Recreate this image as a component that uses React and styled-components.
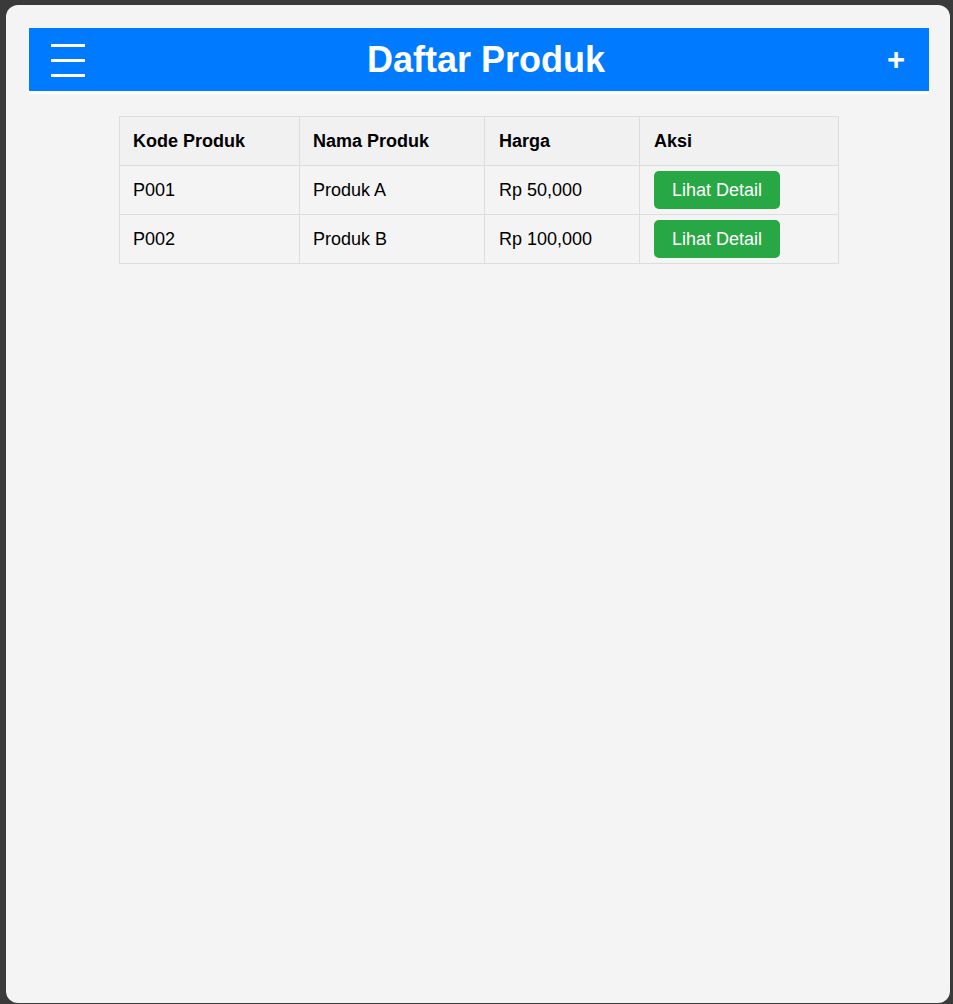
import React from "react";
import styled, { createGlobalStyle } from "styled-components";

const Global = createGlobalStyle`
  html, body { margin: 0; padding: 0; }
  body {
    background: #3a3a3a;
    font-family: "Liberation Sans", Arial, sans-serif;
    font-size: 18px;
    color: #000;
  }
  #root { padding: 5px 3px 0 6px; }
`;

const Panel = styled.div`
  background: #f4f4f4;
  border-radius: 12px;
  height: 998px;
  box-sizing: border-box;
  padding: 23px 21px 23px 23px;
`;

const Header = styled.header`
  background: #007bff;
  border-bottom: 3px solid #ffffff;
  height: 63px;
  padding: 0 22px;
  display: flex;
  align-items: center;
  justify-content: space-between;
  color: #fff;
`;

const Burger = styled.div`
  display: flex;
  flex-direction: column;
  gap: 12px;
  width: 34px;
  margin-top: 1px;
`;

const BurgerLine = styled.span`
  display: block;
  height: 3px;
  background: #fff;
`;

const Title = styled.h1`
  margin: 0;
  font-size: 36px;
  font-weight: bold;
  line-height: 41px;
`;

const AddButton = styled.span`
  font-size: 31px;
  font-weight: bold;
  line-height: 41px;
  margin-right: 2px;
`;

const Table = styled.table`
  width: 719px;
  margin: 22px 0 0 90px;
  border-collapse: collapse;
  table-layout: fixed;
`;

const Th = styled.th`
  height: 48px;
  padding: 0 13px 0 ${(p) => (p.$wide ? 14 : 13)}px;
  text-align: left;
  font-weight: bold;
  background: #f1f1f1;
  border: 1px solid #dddddd;
`;

const Td = styled.td`
  height: 48px;
  padding: 0 13px 0 ${(p) => (p.$wide ? 14 : 13)}px;
  border: 1px solid #dddddd;
`;

const DetailButton = styled.button`
  height: 38px;
  padding: 0 18px;
  border: none;
  border-radius: 5px;
  background: #28a745;
  color: #fff;
  font-family: inherit;
  font-size: 18px;
  cursor: pointer;
  vertical-align: middle;
`;

const products = [
  { code: "P001", name: "Produk A", price: "Rp 50,000" },
  { code: "P002", name: "Produk B", price: "Rp 100,000" },
];

export default function App() {
  return (
    <>
      <Global />
      <Panel>
        <Header>
          <Burger>
            <BurgerLine />
            <BurgerLine />
            <BurgerLine />
          </Burger>
          <Title>Daftar Produk</Title>
          <AddButton>+</AddButton>
        </Header>
        <Table>
          <colgroup>
            <col style={{ width: 180 }} />
            <col style={{ width: 185 }} />
            <col style={{ width: 155 }} />
            <col style={{ width: 199 }} />
          </colgroup>
          <thead>
            <tr>
              <Th>Kode Produk</Th>
              <Th>Nama Produk</Th>
              <Th $wide>Harga</Th>
              <Th $wide>Aksi</Th>
            </tr>
          </thead>
          <tbody>
            {products.map((p) => (
              <tr key={p.code}>
                <Td>{p.code}</Td>
                <Td>{p.name}</Td>
                <Td $wide>{p.price}</Td>
                <Td $wide>
                  <DetailButton>Lihat Detail</DetailButton>
                </Td>
              </tr>
            ))}
          </tbody>
        </Table>
      </Panel>
    </>
  );
}
